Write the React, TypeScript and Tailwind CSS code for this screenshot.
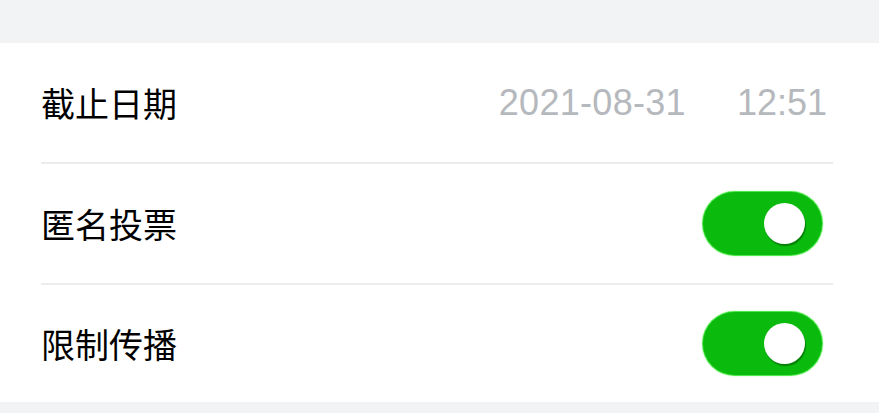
import React from "react";

const cjk = { fontFamily: '"Noto Sans CJK SC", "Noto Sans", sans-serif' };
const num = { fontFamily: '"Liberation Sans", "Noto Sans", sans-serif' };

function Toggle() {
  return (
    <div className="relative w-[119px] h-[63px] rounded-full bg-[#0abb0e] shadow-[0_0_1px_1px_#3de63a]">
      <div className="absolute right-[17px] top-[11px] w-[41px] h-[41px] rounded-full bg-white shadow-[1px_2px_1px_rgba(0,80,0,0.55)]" />
    </div>
  );
}

export default function App() {
  return (
    <div className="w-[879px] h-[413px] bg-[#f2f3f5] flex flex-col overflow-hidden">
      <div className="h-[43px] shrink-0" />
      <div className="bg-white pl-[41px] pr-[46px] flex flex-col">
        <div className="h-[119px] flex items-center justify-between">
          <span style={cjk} className="text-[34px] text-black leading-none">截止日期</span>
          <div style={num} className="flex items-center gap-[51px] text-[36px] text-[#b5b8bd] leading-none pr-[6px]">
            <span className="tracking-[0.3px]">2021-08-31</span>
            <span>12:51</span>
          </div>
        </div>
        <div className="h-[2px] bg-[#ececec]" />
        <div className="h-[119px] flex items-center justify-between">
          <span style={cjk} className="text-[34px] text-black leading-none">匿名投票</span>
          <div className="pr-[11px]"><Toggle /></div>
        </div>
        <div className="h-[2px] bg-[#ececec]" />
        <div className="h-[117px] flex items-center justify-between">
          <span style={cjk} className="text-[34px] text-black leading-none">限制传播</span>
          <div className="pr-[11px]"><Toggle /></div>
        </div>
      </div>
    </div>
  );
}
